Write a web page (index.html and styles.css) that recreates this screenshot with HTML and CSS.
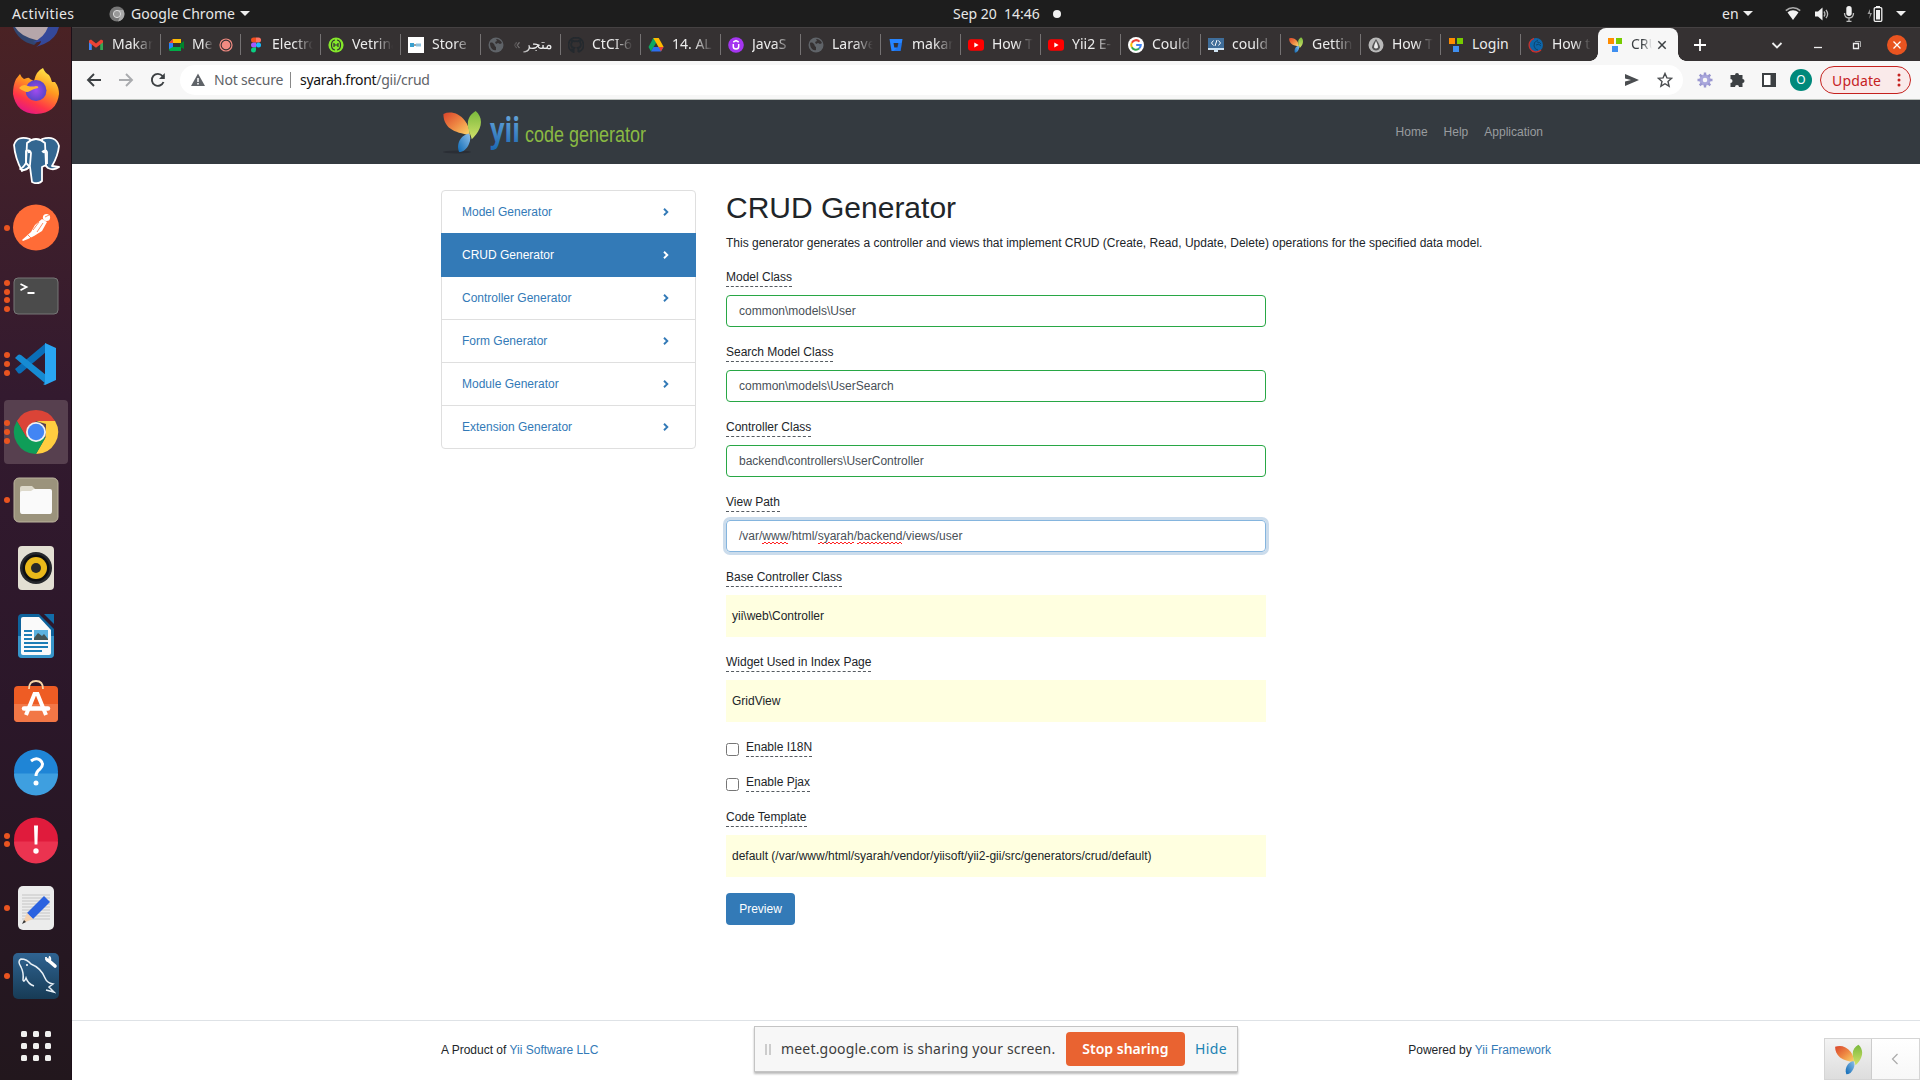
FILE: index.html
```html
<!DOCTYPE html>
<html lang="en">
<head>
<meta charset="utf-8">
<title>CRUD Generator</title>
<link rel="stylesheet" href="styles.css">
</head>
<body>
<svg class="defs" width="0" height="0" aria-hidden="true">
  <defs>
    <linearGradient id="leafRed" x1="0" y1="0" x2="1" y2="1"><stop offset="0" stop-color="#d9442b"/><stop offset=".5" stop-color="#ee8743"/><stop offset="1" stop-color="#fbd96a"/></linearGradient>
    <linearGradient id="leafGreen" x1="0" y1="0" x2="0" y2="1"><stop offset="0" stop-color="#79b93c"/><stop offset="1" stop-color="#d3e26a"/></linearGradient>
    <linearGradient id="leafBlue" x1="1" y1="0" x2="0" y2="1"><stop offset="0" stop-color="#8fc0ea"/><stop offset="1" stop-color="#0c69b5"/></linearGradient>
    <linearGradient id="word" x1="0" y1="0" x2="0" y2="1"><stop offset="0" stop-color="#78b4e3"/><stop offset="1" stop-color="#1765b0"/></linearGradient>
    <symbol id="yii" viewBox="0 0 40 44">
      <path fill="url(#leafRed)" d="M1 4C8 1 17 3 23 11c3 4 5 9 5 15-8-2-15-3-20-7C3 15 1 10 1 4z"/>
      <path fill="url(#leafGreen)" d="M34 1c5 4 7 11 4 18-2 5-5 8-8 11-1-5-4-9-4-16 0-6 3-10 8-13z"/>
      <path fill="url(#leafBlue)" d="M27 24c2 3 2 7 0 11-2 5-6 8-10 8-2-5-1-10 2-14 2-3 5-4 8-5z"/>
    </symbol>
    <symbol id="globe" viewBox="0 0 16 16"><circle cx="8" cy="8" r="7.5" fill="#5f6368"/><path fill="#353132" d="M2 6c2-1 3 0 4 1s0 2 2 3v3c-3 1-6-2-6-7zM8 2c3 0 5 2 6 4l-2 1-2-1-2 1-1-2 2-1z"/></symbol>
    <symbol id="youtube" viewBox="0 0 16 16"><rect y="2.3" width="16" height="11.4" rx="3" fill="#f00"/><path d="M6.3 5.6v4.8L10.6 8z" fill="#fff"/></symbol>
    <symbol id="squares" viewBox="0 0 16 16"><path fill="#ff8c00" d="M1 1h6v6H1z"/><path fill="#7c0" d="M9 1h6v6H9z"/><path fill="#3f8ff0" d="M5 9h6v6H5z"/></symbol>
    <symbol id="angle" viewBox="0 0 6 8"><path d="M1 .8 4.3 4 1 7.2" fill="none" stroke="currentColor" stroke-width="1.9"/></symbol>
  </defs>
</svg>

<header class="topbar">
  <span class="activities">Activities</span>
  <svg class="app-icon" viewBox="0 0 16 16"><circle cx="8" cy="8" r="7.6" fill="#777"/><path fill="#aaa" d="M8 .4A7.6 7.6 0 0 1 9 15.5L12 8 8 4h6.5A7.6 7.6 0 0 0 8 .4z"/><circle cx="8" cy="8" r="3.6" fill="#999" stroke="#ddd"/></svg>
  <span class="app-name">Google Chrome</span>
  <i class="caret"></i>
  <span class="clock">Sep 20&nbsp; 14:46</span>
  <i class="note-dot"></i>
  <span class="lang">en</span>
  <i class="caret"></i>
  <div class="tray">
    <svg width="16" height="16" viewBox="0 0 16 16"><path d="M.8 4.6C5 .8 11 .8 15.2 4.6" fill="none" stroke="#aaa" stroke-width="1.6"/><path d="M2.5 6.5C5.8 3.6 10.2 3.6 13.5 6.5L8 14z" fill="#f2f2f2"/></svg>
    <svg width="16" height="16" viewBox="0 0 16 16"><path d="M1 5.5h3L8.500 1.500v13L4 10.500H1z" fill="#f2f2f2"/><path d="M10 5.500q1.800 2.500 0 5M12 3.800q3.200 4.200 0 8.400" fill="none" stroke="#bbb" stroke-width="1.300"/></svg>
    <svg width="12" height="18" viewBox="0 0 12 18"><rect x="3.300" y="1" width="5.400" height="10" rx="2.700" fill="#f2f2f2"/><path d="M1.500 8q0 5 4.500 5t4.500-5M6 13v3M3.500 16.300h5" fill="none" stroke="#bbb" stroke-width="1.300"/></svg>
    <svg class="battery" width="16" height="18" viewBox="0 0 16 18"><path d="M3 4 .5 9H3l-.8 5L5 8H3z" fill="#999"/><rect x="7.200" y="2.700" width="7.600" height="13.600" rx="1" fill="none" stroke="#f2f2f2" stroke-width="1.300"/><path d="M9 5h4v9.500H9zM9 1h4v2H9z" fill="#f2f2f2"/></svg>
    <i class="caret"></i>
  </div>
</header>

<div class="desktop">
  <nav class="dock">
    <div class="slot first"><svg width="48" height="22" viewBox="0 0 48 22"><path d="M1 0h17l8 12q-1 4-4 6Q6 14 1 0z" fill="#31456f"/><path d="M3 0h38l-8 13q-4 2-9 0Q8 9 3 0z" fill="#b5a6aa"/><path d="M36 0h11q-3 12-15 17l-8 3q5-3 5-6-4 2-8 1 11-4 15-15z" fill="#34489a"/></svg></div>
    <div class="slot"><svg width="48" height="48" viewBox="0 0 48 48"><defs><linearGradient id="ff" x1=".8" y1="0" x2=".3" y2="1"><stop offset="0" stop-color="#fff34f"/><stop offset=".4" stop-color="#ff9a1f"/><stop offset=".75" stop-color="#ff3647"/><stop offset="1" stop-color="#e31587"/></linearGradient><radialGradient id="ffp"><stop offset="0" stop-color="#a04bf0"/><stop offset="1" stop-color="#5b45c8"/></radialGradient></defs><path fill="url(#ff)" d="M4 11l4-5q1 3 4 5l3-1q2-1 3 1l4 2Q24 3 31 0q2 5 6 7 2 3 3 7l3 0Q47 19 47 26 45 45 24 46 4 45 1 26q0-9 3-15z"/><circle cx="24" cy="22.500" r="10.500" fill="url(#ffp)"/><path fill="#ffb52e" d="M7 20q4-5 9-2 4 1 8 0 3 0 2 2-5 1-8 3-3 2-6 0-3-1-5-3z"/></svg></div>
    <div class="slot"><svg width="48" height="48" viewBox="0 0 48 48"><g fill="#336791" stroke="#fff" stroke-width="1.800" stroke-linejoin="round"><path d="M30 3q14-4 17 7-1 10-7 20l7 1q-5 4-11 1l-4-4z"/><path d="M18 3Q5-1 2 9q1 13 8 26l6-3 4-4z"/><path d="M15 7q9-8 18 0l1 22-4 2v14q-4 4-10 1l-2-15-4-4z"/><path d="M19 17q-1-4-5-2v12q-3 5-6 6 8 3 10-4z" fill="none"/><path d="M30 16q4-3 5 0v12" fill="none"/></g><circle cx="17" cy="16" r="1.200" fill="#fff"/><circle cx="32" cy="16" r="1.200" fill="#fff"/></svg></div>
    <div class="slot"><span class="dots"><i></i></span><svg width="48" height="48" viewBox="0 0 48 48"><circle cx="24" cy="23.500" r="23" fill="#ff6c37"/><circle cx="34.500" cy="13.500" r="3.600" fill="#fff"/><path d="M30 15l5 3-5 9-8 5-6 3-5 2-1-1 9-8 4-7z" fill="#fff"/><path d="M21 26l6-8M25 28l6-9M16 31l3 3M33 13l4-2" stroke="#ff6c37" stroke-width=".8"/></svg></div>
    <div class="slot"><span class="dots"><i></i><i></i><i></i><i></i></span><svg width="48" height="48" viewBox="0 0 48 48"><rect x="2" y="6" width="44" height="36" rx="4" fill="#4b4b4b" stroke="#777"/><path d="M8.500 12l6 3-6 3.300M15.500 21h7" fill="none" stroke="#fff" stroke-width="1.800"/></svg></div>
    <div class="slot"><span class="dots"><i></i><i></i><i></i></span><svg width="48" height="48" viewBox="0 0 48 48"><path d="M3 29l3 4q1 1 3 0l25-21V3z" fill="#0a6eb8"/><path d="M3 18l3-3q1-1 3 0l25 20v9z" fill="#168bd3"/><path d="M33 3l11 5v32l-11 5-2-1q2 0 2-2z" fill="#29a6f3"/></svg></div>
    <div class="slot"><span class="plate"></span><span class="dots"><i></i><i></i><i></i></span><svg width="48" height="48" viewBox="0 0 48 48"><path d="M4.900 13A22 22 0 0 1 43.100 13H24L14.500 29.500z" fill="#db4437"/><path d="M43.100 13A22 22 0 0 1 24 46l9.500-16.500L34 16l-10-3z" fill="#ffcd40"/><path d="M4.900 13A22 22 0 0 0 24 46l9.500-16.500H14.500z" fill="#0f9d58"/><circle cx="24" cy="24" r="10" fill="#f1f1f1"/><circle cx="24" cy="24" r="8.200" fill="#4285f4"/></svg></div>
    <div class="slot"><span class="dots"><i></i></span><svg width="48" height="48" viewBox="0 0 48 48"><rect x="2" y="2" width="44" height="44" rx="5" fill="#9b937c" stroke="#bcb49e"/><path d="M8 14V12q0-2 2-2h10l3 3v5H8z" fill="#ddd9cb"/><path d="M8 17q0-2 2-2h9l3-2h16q2 0 2 2v20q0 3-2 3H10q-2 0-2-3z" fill="#fafafa"/></svg></div>
    <div class="slot"><svg width="48" height="48" viewBox="0 0 48 48"><rect x="6" y="2" width="36" height="44" rx="4" fill="#e3dfd3"/><circle cx="24" cy="24" r="16" fill="#26282c"/><circle cx="24" cy="24" r="13.500" fill="#0e0f12"/><circle cx="24" cy="24" r="11" fill="#eab91a"/><circle cx="24" cy="24" r="5" fill="#292929"/></svg></div>
    <div class="slot"><svg width="48" height="48" viewBox="0 0 48 48"><path d="M6 6q0-4 4-4h17l15 15v25q0 4-4 4H10q-4 0-4-4z" fill="#0e639c"/><path d="M6 24h36v18q0 4-4 4H10q-4 0-4-4z" fill="#3795c9"/><path d="M9 7q0-2 2-2h16l12 13v23q0 2-2 2H11q-2 0-2-2z" fill="#fafafa"/><path d="M32 2h10v10z" fill="#126da9"/><path d="M12 19h8M12 23h8M12 27h8M12 31h24M12 35h24M12 39h18" stroke="#1c7db6" stroke-width="2"/><path d="M22 18h14v10H22z" fill="#5bb2df"/><path d="M22 28v-2l4-5 4 3 2-2 4 5v1z" fill="#455"/></svg></div>
    <div class="slot"><svg width="48" height="48" viewBox="0 0 48 48"><rect x="2" y="6" width="44" height="36" rx="4" fill="#ee5c24"/><path d="M2 24h44v14q0 4-4 4H6q-4 0-4-4z" fill="#f27746"/><path d="M17 9q0-8 7-8t7 8" fill="none" stroke="#f8d6a8" stroke-width="1.800"/><path d="M14 35l8.500-21h3L34 35" fill="none" stroke="#fff" stroke-width="4"/><path d="M12 28.500h24" stroke="#fff" stroke-width="4.500" stroke-linecap="round"/></svg></div>
    <div class="slot"><svg width="48" height="48" viewBox="0 0 48 48"><circle cx="24" cy="23.500" r="22" fill="#1f85d6"/><path d="M2 25.500h44a22 22 0 0 1-44 0z" fill="#3e9fe0"/><path d="M19 13q5-4 9-1 5 4 0 9-4 3-4 7" fill="none" stroke="#fff" stroke-width="3"/><circle cx="24" cy="35" r="2.500" fill="#fff"/></svg></div>
    <div class="slot"><span class="dots"><i></i><i></i></span><svg width="48" height="48" viewBox="0 0 48 48"><circle cx="24" cy="23.500" r="22" fill="#e01b3c"/><path d="M2 25.500h44a22 22 0 0 1-44 0z" fill="#eb3350"/><path d="M22 9.500h4l-.6 19h-2.800z" fill="#fff"/><circle cx="24" cy="35" r="2.700" fill="#fff"/></svg></div>
    <div class="slot"><span class="dots"><i></i></span><svg width="48" height="48" viewBox="0 0 48 48"><rect x="6" y="2" width="36" height="44" rx="5" fill="#ececec"/><path d="M10 11h28M10 14h28M10 17h28M10 20h28M10 23h28M10 26h28M10 29h28M10 32h28M10 35h28" stroke="#bbb" stroke-width=".8"/><path d="M32 12l6 6-17 17-6-6z" fill="#2b62e0"/><path d="M15 29l6 6-10 4z" fill="#f4d2b0"/><path d="M12 36l-2 4 4-2z" fill="#333"/></svg></div>
    <div class="slot"><span class="dots"><i></i></span><svg width="48" height="48" viewBox="0 0 48 48"><defs><linearGradient id="my" x1="0" y1="0" x2="0" y2="1"><stop offset="0" stop-color="#2f6391"/><stop offset="1" stop-color="#173b55"/></linearGradient></defs><rect x="1" y="1" width="46" height="46" rx="5" fill="url(#my)"/><path d="M22 34q-6-2-8-8-2 5-3 2 1-7-2-13-4-6 0-8 6 0 10 5 10 4 14 14 2 5 8 6l-4 3 5 5-8-2" fill="none" stroke="#e8f0f6" stroke-width="1.500"/><circle cx="15" cy="13" r="1" fill="#fff"/><path d="M36 8l7 6" stroke="#fff" stroke-width="3.600" stroke-linecap="round"/><path d="M34 5v2.500q1 2.500 4 1.500 1-3-1-4.500" fill="none" stroke="#fff" stroke-width="1.800"/></svg></div>
    <div class="slot last"><svg width="30" height="30" viewBox="0 0 30 30" fill="#f0f0ef"><rect width="6" height="6" rx="1.500"/><rect x="12" width="6" height="6" rx="1.500"/><rect x="24" width="6" height="6" rx="1.500"/><rect y="12" width="6" height="6" rx="1.500"/><rect x="12" y="12" width="6" height="6" rx="1.500"/><rect x="24" y="12" width="6" height="6" rx="1.500"/><rect y="24" width="6" height="6" rx="1.500"/><rect x="12" y="24" width="6" height="6" rx="1.500"/><rect x="24" y="24" width="6" height="6" rx="1.500"/></svg></div>
  </nav>

  <div class="window">
    <div class="tabs">
      <div class="tab no-sep"><svg viewBox="0 0 16 16"><path d="M1 13V4h2.800v9z" fill="#4285f4"/><path d="M12.200 13V4H15v9z" fill="#34a853"/><path d="M1 3.500 3 2.600 8 6.600l5-4 2 .9v2L8 10.700 1 5.500z" fill="#ea4335"/></svg><span>Makan</span></div>
      <div class="tab"><svg viewBox="0 0 16 16"><path d="M1 6l4-4h8v4H5v4H1z" fill="#fbbc04"/><path d="M1 6h4v6H1z" fill="#2684fc"/><path d="M5 10h8v4H2q-1 0-1-2z" fill="#00ac47"/><path d="M1 6l4-4v4z" fill="#ea4335"/><path d="M12 7l4-3v8l-4-2z" fill="#00832d"/></svg><span class="short">Mee</span><svg class="rec" viewBox="0 0 14 14"><circle cx="7" cy="7" r="6" fill="none" stroke="#f28b82" stroke-width="1.200"/><circle cx="7" cy="7" r="4.300" fill="#f28b82"/></svg></div>
      <div class="tab"><svg viewBox="0 0 16 16"><path d="M8 .5H5.500a2.500 2.500 0 0 0 0 5H8z" fill="#f24e1e"/><path d="M8 .5h2.500a2.500 2.500 0 0 1 0 5H8z" fill="#ff7262"/><path d="M8 5.500H5.500a2.500 2.500 0 0 0 0 5H8z" fill="#a259ff"/><circle cx="10.500" cy="8" r="2.500" fill="#1abcfe"/><path d="M8 10.500H5.500A2.500 2.500 0 1 0 8 13z" fill="#0acf83"/></svg><span>Electro</span></div>
      <div class="tab"><svg viewBox="0 0 16 16"><circle cx="8" cy="8" r="7.600" fill="#84e82a"/><path d="M7 3Q3.500 3.500 3.500 8T7 13M9 3q3.500.5 3.500 5T9 13M6 6v4M10 6v4M6 8h4" fill="none" stroke="#333" stroke-width="1.200"/></svg><span>Vetrina</span></div>
      <div class="tab"><svg viewBox="0 0 16 16"><path d="M0 0h16v16H0z" fill="#fff"/><path d="M2 6h4v4H2z" fill="#39a0cf"/><path d="M6 8h2" stroke="#444"/><path d="M8 6.500h5v3H8z" fill="#8cc0dd"/></svg><span>Store</span></div>
      <div class="tab"><svg><use href="#globe"/></svg><span class="rtl" dir="rtl">متجر »</span></div>
      <div class="tab"><svg viewBox="0 0 16 16"><path d="M8 .5A7.500 7.500 0 0 0 5.600 15.100V13q-2 .3-2.600-1.300M10.400 15.100A7.500 7.500 0 0 0 8 .5M10.400 15V12.500q0-1-.5-1.500 3-.5 3-3.500 0-1-.8-2 .2-1-.1-2-1 0-2 .8-2-.5-4 0-1-.8-2-.8-.3 1-.1 2-.8 1-.8 2 0 3 3 3.500-.5.500-.5 1.500" fill="none" stroke="#24292e" stroke-width="1.800"/></svg><span>CtCI-6</span></div>
      <div class="tab"><svg viewBox="0 0 16 16"><path d="M5.300 1h5.400L8 6 3 14.500.5 10z" fill="#0da960"/><path d="M5.300 1h5.400l5 9H10.500z" fill="#ffba00"/><path d="M5.500 10h10L13 14.500H3z" fill="#2d6ff0"/><path d="M10.500 10h5L13 14.500z" fill="#ea4335"/></svg><span>14. AL</span></div>
      <div class="tab"><svg viewBox="0 0 16 16"><circle cx="8" cy="8" r="7.800" fill="#a435f0"/><path d="M5.300 7v2.500Q5.300 12 8 12t2.700-2.500V7M5.300 5 8 3.500 10.700 5" fill="none" stroke="#fff" stroke-width="1.500"/></svg><span>JavaS</span></div>
      <div class="tab"><svg><use href="#globe"/></svg><span>Larave</span></div>
      <div class="tab"><svg viewBox="0 0 16 16"><path d="M1.500 2h13l-2 12h-9z" fill="#2684ff"/><path d="M5.500 6h5l-.8 4.500H6.300z" fill="#353132"/><path d="M14 6h-4l-.7 4.500-3.500 3.500h7z" fill="#1564d6" opacity=".5"/></svg><span>makan</span></div>
      <div class="tab"><svg><use href="#youtube"/></svg><span>How T</span></div>
      <div class="tab"><svg><use href="#youtube"/></svg><span>Yii2 E-</span></div>
      <div class="tab"><svg viewBox="0 0 16 16"><circle cx="8" cy="8" r="8" fill="#fff"/><path d="M11.500 4.600A4.800 4.800 0 0 0 3.800 5.700" fill="none" stroke="#ea4335" stroke-width="2"/><path d="M3.800 5.700a4.800 4.800 0 0 0 0 4.600" fill="none" stroke="#fbbc05" stroke-width="2"/><path d="M3.800 10.300a4.800 4.800 0 0 0 7.300 1.300" fill="none" stroke="#34a853" stroke-width="2"/><path d="M11.100 11.600Q12.800 10 12.800 8H8.200" fill="none" stroke="#4285f4" stroke-width="2"/></svg><span>Could</span></div>
      <div class="tab"><svg viewBox="0 0 16 16"><path d="M0 1h16v10H0z" fill="#3f6d99"/><path d="M0 11h16v2H0zM6 13h4v2H6z" fill="#cfe3f2"/><path d="M5.500 3.500 3.500 6l2 2.500M10.500 3.500l2 2.500-2 2.500M9 3 7 9" fill="none" stroke="#fff"/></svg><span>could</span></div>
      <div class="tab"><svg viewBox="0 0 40 44"><use href="#yii"/></svg><span>Gettin</span></div>
      <div class="tab"><svg viewBox="0 0 16 16"><circle cx="8" cy="8" r="7.500" fill="#b9b9b9"/><path d="M8 2Q4 8 4 10.500q1 3 4 3t4-3Q12 8 8 2z" fill="#555"/><path d="M8 4Q6 8 6 10.500q1 1 2 1t2-1Q10 8 8 4z" fill="#eee"/></svg><span>How T</span></div>
      <div class="tab"><svg><use href="#squares"/></svg><span class="whole">Login</span></div>
      <div class="tab narrow"><svg viewBox="0 0 16 16"><circle cx="8" cy="8" r="7" fill="#0d65a8"/><path d="M6 1.300A7 7 0 1 0 13 13" fill="none" stroke="#c9302c" stroke-width="1.300"/><path d="M10 3Q5 5 6 9q1 4 4 4M9 5q3 0 4 2M8 8q3-2 5 1" fill="none" stroke="#0a4470"/></svg><span>How t</span></div>
      <div class="tab active"><svg><use href="#squares"/></svg><span class="short">CRU</span><svg class="close" viewBox="0 0 10 10"><path d="M1.300 1.300l7.400 7.400M8.700 1.300 1.300 8.700" stroke="#3c4043" stroke-width="1.500"/></svg></div>
      <svg class="plus" viewBox="0 0 14 14"><path d="M7 1v12M1 7h12" stroke="#fff" stroke-width="1.800"/></svg>
      <div class="controls">
        <svg width="12" height="12" viewBox="0 0 12 12"><path d="M1.500 4 6 8.500 10.500 4" fill="none" stroke="#eee" stroke-width="1.800"/></svg>
        <svg width="10" height="12" viewBox="0 0 10 12"><path d="M1 8.500h8" stroke="#eee" stroke-width="1.300"/></svg>
        <svg width="10" height="12" viewBox="0 0 10 12"><path d="M1.500 4.500h5v5h-5z" fill="none" stroke="#eee" stroke-width="1.300"/><path d="M3 2.500h5.500V8" fill="none" stroke="#aaa"/></svg>
        <svg width="20" height="20" viewBox="0 0 20 20"><circle cx="10" cy="10" r="10" fill="#e95420"/><path d="M6.500 6.500l7 7M13.500 6.500l-7 7" stroke="#fff" stroke-width="1.300"/></svg>
      </div>
    </div>

    <div class="toolbar">
      <svg class="nav-icon" viewBox="0 0 16 16"><path d="M15 8H2M8 2 2 8l6 6" fill="none" stroke="#3c4043" stroke-width="1.900"/></svg>
      <svg class="nav-icon" viewBox="0 0 16 16"><path d="M1 8h13M8 2l6 6-6 6" fill="none" stroke="#a9abae" stroke-width="1.900"/></svg>
      <svg class="nav-icon" viewBox="0 0 16 16"><path d="M13.500 10A6 6 0 1 1 12.500 4L14 5.500" fill="none" stroke="#3c4043" stroke-width="1.900"/><path d="M14.800 1v6H9z" fill="#3c4043"/></svg>
      <div class="omnibox">
        <svg width="16" height="16" viewBox="0 0 16 16"><path d="M8 1.500 15 14H1z" fill="#5f6368"/><path d="M8 6v4M8 11v1.500" stroke="#fff" stroke-width="1.500"/></svg>
        <span class="insecure">Not secure</span>
        <i class="bar"></i>
        <span class="url"><b>syarah.front</b>/gii/crud</span>
        <svg class="send" width="16" height="16" viewBox="0 0 16 16"><path d="M1 2l14 6-14 6V9.500L7 8 1 6.500z" fill="#4a4d50"/></svg>
        <svg width="16" height="16" viewBox="0 0 16 16"><path d="M8 1.500l1.900 4.400 4.800.4L11 9.500l1.100 4.700L8 11.700l-4.100 2.500L5 9.500 1.300 6.300l4.800-.4z" fill="none" stroke="#4a4d50" stroke-width="1.400"/></svg>
      </div>
      <svg class="ext gear" viewBox="0 0 16 16"><circle cx="8" cy="8" r="4" fill="none" stroke="#a9a7dc" stroke-width="3.400"/><path d="M8 .5v3M8 12.500v3M.5 8h3M12.500 8h3M2.700 2.700l2 2M11.300 11.300l2 2M2.700 13.300l2-2M11.300 4.700l2-2" stroke="#9a97d0" stroke-width="2.400"/></svg>
      <svg class="ext" viewBox="0 0 16 16"><path d="M6 3a2 2 0 0 1 4 0h3.500v4a2 2 0 0 1 0 4v4H10a2 2 0 0 0-4 0H1.500v-4a2 2 0 0 0 0-4V3z" fill="#3c4043"/></svg>
      <svg class="ext" viewBox="0 0 16 16"><path d="M2 2h12v12H2z" fill="#fff" stroke="#3c4043" stroke-width="2"/><path d="M9.500 2H14v12H9.500z" fill="#3c4043"/></svg>
      <span class="avatar">O</span>
      <span class="update">Update<svg width="4" height="14" viewBox="0 0 4 14" fill="#c5221f"><circle cx="2" cy="2" r="1.500"/><circle cx="2" cy="7" r="1.500"/><circle cx="2" cy="12" r="1.500"/></svg></span>
    </div>

    <div class="page">
      <header class="navbar">
        <div class="container">
          <svg class="logo" width="210" height="50" viewBox="0 0 210 50">
            <ellipse cx="16" cy="45" rx="14" ry="1.500" fill="#2a2e35"/>
            <use href="#yii" x="1" y="3" width="40" height="43"/>
            <text class="logo-word" x="49" y="35" textLength="30" lengthAdjust="spacingAndGlyphs" fill="url(#word)">yii</text>
            <text class="logo-sub" x="84" y="34.500" textLength="121" lengthAdjust="spacingAndGlyphs">code generator</text>
          </svg>
          <nav class="links"><a>Home</a><a>Help</a><a>Application</a></nav>
        </div>
      </header>

      <main class="container content">
        <aside class="menu">
          <a>Model Generator<svg><use href="#angle"/></svg></a>
          <a class="current">CRUD Generator<svg><use href="#angle"/></svg></a>
          <a>Controller Generator<svg><use href="#angle"/></svg></a>
          <a>Form Generator<svg><use href="#angle"/></svg></a>
          <a>Module Generator<svg><use href="#angle"/></svg></a>
          <a>Extension Generator<svg><use href="#angle"/></svg></a>
        </aside>
        <section class="generator">
          <h1>CRUD Generator</h1>
          <p>This generator generates a controller and views that implement CRUD (Create, Read, Update, Delete) operations for the specified data model.</p>
          <form>
            <div class="group"><label>Model Class</label><div class="field">common\models\User</div></div>
            <div class="group"><label>Search Model Class</label><div class="field">common\models\UserSearch</div></div>
            <div class="group"><label>Controller Class</label><div class="field">backend\controllers\UserController</div></div>
            <div class="group"><label>View Path</label><div class="field focused">/var/<u>www</u>/html/<u>syarah</u>/<u>backend</u>/views/user</div></div>
            <div class="group"><label>Base Controller Class</label><div class="sticky">yii\web\Controller</div></div>
            <div class="group"><label>Widget Used in Index Page</label><div class="sticky">GridView</div></div>
            <div class="group check"><i class="box"></i><label>Enable I18N</label></div>
            <div class="group check"><i class="box"></i><label>Enable Pjax</label></div>
            <div class="group"><label>Code Template</label><div class="sticky">default (/var/www/html/syarah/vendor/yiisoft/yii2-gii/src/generators/crud/default)</div></div>
            <button type="button" class="preview">Preview</button>
          </form>
        </section>
      </main>

      <footer class="footer">
        <div class="container"><span>A Product of <a>Yii Software LLC</a></span><span>Powered by <a>Yii Framework</a></span></div>
      </footer>
    </div>
  </div>
</div>

<div class="share">
  <i class="grip"></i>
  <span class="share-text">meet.google.com is sharing your screen.</span>
  <button type="button" class="stop">Stop sharing</button>
  <a class="hide">Hide</a>
</div>

<div class="debug">
  <div class="debug-logo"><svg width="29" height="31"><use href="#yii"/></svg></div>
  <div class="debug-toggle"><svg width="8" height="12" viewBox="0 0 8 12"><path d="M6.500 1 1.500 6l5 5" fill="none" stroke="#aaa" stroke-width="1.200"/></svg></div>
</div>
</body>
</html>
```
FILE: styles.css
```css
* { box-sizing: border-box; }
body {
  margin: 0;
  width: 1920px;
  height: 1080px;
  overflow: hidden;
  display: flex;
  flex-direction: column;
  background: #fff;
  font-family: "Noto Sans", "Noto Sans CJK SC", sans-serif;
  font-size: 14px;
}
svg { display: block; flex: none; }
.defs { position: absolute; }
i { flex: none; }

/* Desktop top bar */
.topbar {
  height: 27px;
  flex: none;
  display: flex;
  align-items: center;
  background: #1d1d1d;
  color: #e8e8e8;
  padding: 0 14px 0 12px;
}
.activities { width: 97px; letter-spacing: .4px; }
.app-icon { width: 16px; height: 16px; margin-right: 6px; }
.app-name { width: 104px; white-space: nowrap; letter-spacing: .05px; }
.caret {
  margin-left: 5px;
  border: 5px solid transparent;
  border-top: 5px solid #eee;
  border-bottom: 0;
}
.clock { margin-left: 703px; width: 87px; padding-bottom: 1px; white-space: nowrap; letter-spacing: -.02px; }
.note-dot { width: 8px; height: 8px; border-radius: 50%; background: #f2f2f2; margin-left: 13px; }
.lang { margin-left: 661px; width: 16px; }
.tray { margin-left: auto; display: flex; align-items: center; gap: 13px; }
.tray .caret { margin-left: 0; }
.battery { margin-left: -1px; }

.desktop { flex: 1; display: flex; min-height: 0; }

/* Dock */
.dock {
  width: 72px;
  flex: none;
  display: flex;
  flex-direction: column;
  overflow: hidden;
  border-right: 1px solid #1c0f18;
  background: linear-gradient(#4a2224 0, #41202a 12%, #331a2f 35%, #2b1729 65%, #22171d 100%);
}
.slot { position: relative; height: 68px; flex: none; display: flex; align-items: center; justify-content: center; padding-left: 1px; }
.slot svg { position: relative; }
.slot.first { height: 31px; align-items: flex-start; }
.slot.last { height: 71px; }
.plate { position: absolute; left: 4px; top: 2px; width: 64px; height: 64px; border-radius: 4px; background: #57404f; }
.dots { position: absolute; left: 4px; top: 0; bottom: 0; display: flex; flex-direction: column; justify-content: center; gap: 2.700px; z-index: 1; }
.dots i { width: 6px; height: 6px; border-radius: 50%; background: #e95420; }

/* Browser window */
.window { flex: 1; display: flex; flex-direction: column; min-width: 0; }
.tabs {
  height: 34px;
  flex: none;
  display: flex;
  align-items: center;
  padding-left: 8px;
  background: #353132;
  border-top: 1px solid #454142;
}
.tab {
  width: 80px;
  height: 21px;
  flex: none;
  display: flex;
  align-items: center;
  padding: 0 7px;
  border-left: 1px solid #757273;
  color: #ececec;
}
.tab svg { width: 16px; height: 16px; margin-right: 8px; }
.tab span {
  flex: 1;
  min-width: 0;
  padding-bottom: 2px;
  white-space: nowrap;
  overflow: hidden;
  -webkit-mask-image: linear-gradient(90deg, #000 55%, transparent);
  mask-image: linear-gradient(90deg, #000 55%, transparent);
}
.tab .short { flex: 0 0 21px; }
.tab .whole { -webkit-mask-image: none; mask-image: none; }
.tab .rtl { -webkit-mask-image: linear-gradient(270deg, #000 55%, transparent); mask-image: linear-gradient(270deg, #000 55%, transparent); }
.tab .rec { width: 14px; height: 14px; margin: 0 0 0 6px; }
.tab.no-sep { border-left-color: transparent; }
.tab.narrow { width: 78px; }
.tab.active {
  position: relative;
  height: 33px;
  padding-left: 9px;
  border: 0;
  border-radius: 8px 8px 0 0;
  background: #f7f7f7;
  color: #3c4043;
}
.tab.active::before, .tab.active::after {
  content: "";
  position: absolute;
  bottom: 0;
  width: 8px;
  height: 8px;
}
.tab.active::before { left: -8px; background: radial-gradient(circle at 0 0, transparent 7.500px, #f7f7f7 8px); }
.tab.active::after { right: -8px; background: radial-gradient(circle at 100% 0, transparent 7.500px, #f7f7f7 8px); }
.tab .close { width: 10px; height: 10px; margin: 0 0 0 5px; }
.plus { width: 14px; height: 14px; margin-left: 15px; }
.controls { margin-left: auto; display: flex; align-items: center; gap: 30px; padding-right: 13px; }
.controls svg:nth-child(3) { margin-right: -5px; }
.controls svg:nth-child(2) { margin-right: -1px; }

.toolbar {
  height: 39px;
  flex: none;
  display: flex;
  align-items: center;
  background: #f7f7f7;
  border-bottom: 1px solid #b9bfba;
  padding: 0 9px 0 14px;
}
.nav-icon { width: 16px; height: 16px; margin-right: 16px; }
.omnibox {
  width: 1503px;
  height: 30px;
  flex: none;
  margin-left: -2px;
  display: flex;
  align-items: center;
  padding: 0 10px;
  background: #fff;
  border-radius: 15px;
  color: #5f6368;
}
.insecure { margin-left: 8px; width: 68px; padding-bottom: 1px; white-space: nowrap; letter-spacing: -.2px; }
.bar { width: 1px; height: 16px; background: #888; margin: 0 9px 0 8px; }
.url { padding-bottom: 1px; letter-spacing: -.3px; }
.url b { font-weight: 400; color: #111; }
.send { margin-left: auto; margin-right: 17px; }
.ext { width: 16px; height: 16px; margin-left: 16px; }
.gear { margin-left: 14px; }
.avatar {
  width: 22px; height: 22px;
  margin-left: 13px;
  border-radius: 50%;
  background: #00897b;
  color: #fff;
  font-size: 12px;
  line-height: 22px;
  text-align: center;
}
.update {
  width: 91px; height: 28px;
  margin-left: auto;
  display: flex;
  align-items: center;
  justify-content: space-between;
  padding: 0 9px 0 11px;
  border: 1px solid #c5221f;
  border-radius: 14px;
  background: #faeaea;
  color: #c5221f;
  letter-spacing: .15px;
}

/* Page */
.page {
  flex: 1;
  display: flex;
  flex-direction: column;
  min-height: 0;
  background: #fff;
  color: #212529;
  font-family: "Liberation Sans", Arial, sans-serif;
  font-size: 12px;
  line-height: 18px;
}
.page a { color: #337ab7; }
.container { width: 1110px; margin-left: 369px; display: flex; }
.navbar { height: 64px; flex: none; background: #343a40; display: flex; align-items: center; }
.navbar .container { align-items: center; justify-content: space-between; }
.logo-word { font-family: "Open Sans", sans-serif; font-size: 34px; font-weight: 700; }
.logo-sub { font-family: "Liberation Sans", sans-serif; font-size: 22px; fill: #8ab943; }
.links { display: flex; gap: 16px; padding-right: 8px; }
.page .links a { color: #999c9f; }

.content { flex: 1; padding-top: 26px; gap: 30px; align-items: flex-start; }
.menu { width: 255px; flex: none; border: 1px solid #dfdfdf; border-radius: 4px; }
.menu a {
  height: 43px;
  display: flex;
  align-items: center;
  justify-content: space-between;
  padding: 0 26px 0 20px;
  border-bottom: 1px solid #dfdfdf;
}
.menu a:last-child { height: 42px; border-bottom: 0; }
.menu svg { width: 6px; height: 8px; }
.menu .current {
  margin: -1px -1px 0;
  height: 44px;
  padding: 0 27px 0 21px;
  border-color: #337ab7;
  background: #337ab7;
  color: #fff;
}
h1 { margin: 0 0 8px; font-size: 30px; font-weight: 400; line-height: 36px; }
p { margin: 0 0 16px; }
form { width: 540px; }
.group { margin-bottom: 16px; display: flex; flex-direction: column; align-items: flex-start; gap: 8px; }
.group label { height: 19px; border-bottom: 1px dashed #555b61; }
.field {
  width: 540px;
  height: 32px;
  padding: 6px 12px;
  border: 1px solid #28a745;
  border-radius: 4px;
  color: #495057;
}
.focused { border-color: #85b5de; box-shadow: 0 0 0 3px #cbdcec; }
.focused u {
  padding-bottom: 1px;
  text-decoration: none;
  background:
    linear-gradient(90deg, #f22 2px, transparent 2px) 0 100% / 4px 1px repeat-x,
    linear-gradient(90deg, #f22 2px, transparent 2px) 2px calc(100% - 1px) / 4px 1px repeat-x;
}
.sticky { width: 540px; height: 42px; padding: 12px 6px; background: #ffffe0; }
.check { flex-direction: row; gap: 7px; }
.box { width: 13px; height: 13px; margin-top: 5px; border: 1px solid #767676; border-radius: 2.500px; }
.preview {
  display: block;
  width: 69px; height: 32px;
  padding: 0;
  border: 0;
  border-radius: 4px;
  background: #337ab7;
  color: #fff;
  font: inherit;
}
.footer { height: 60px; flex: none; border-top: 1px solid #dee2e6; padding-top: 20px; }
.footer .container { justify-content: space-between; }

/* Overlays */
.share {
  position: absolute;
  left: 754px; top: 1026px;
  width: 484px; height: 46px;
  display: flex;
  align-items: center;
  padding: 0 10px;
  background: #f7f7f7;
  border: 1px solid #c4c4c4;
  box-shadow: 0 2px 2px #bbb;
  color: #3d3d3d;
}
.grip { width: 6px; height: 11px; border: 2px solid #ccc; border-width: 0 2px; margin-right: 10px; }
.share-text { width: 285px; padding-bottom: 2px; white-space: nowrap; letter-spacing: .18px; }
.stop {
  width: 119px; height: 34px;
  padding: 0 0 1px;
  border: 0;
  border-radius: 4px;
  background: #e96331;
  color: #fff;
  font: 600 14px "Noto Sans", sans-serif;
}
.hide { margin-left: 10px; padding-bottom: 2px; color: #1c83b4; letter-spacing: .4px; }
.debug {
  position: absolute;
  right: 0; top: 1038px;
  width: 96px; height: 42px;
  display: flex;
  border: 1px solid #d5d5d5;
  background: linear-gradient(#fff, #f7f7f7);
}
.debug-logo {
  width: 47px;
  display: flex;
  align-items: center;
  justify-content: center;
  border-right: 1px solid #ccc;
  background: linear-gradient(#f3f3f3, #ddd);
}
.debug-toggle { flex: 1; display: flex; align-items: center; justify-content: center; padding-right: 2px; }
```
